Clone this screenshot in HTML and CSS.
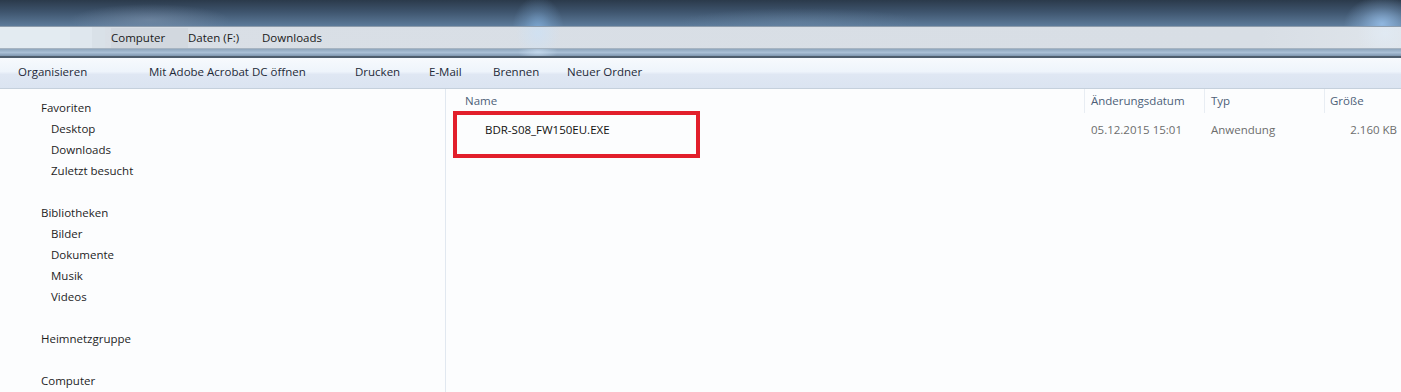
FILE: index.html
```html
<!DOCTYPE html>
<html lang="de">
<head>
<meta charset="utf-8">
<title>Downloads</title>
<link rel="stylesheet" href="styles.css">
</head>
<body>
<div class="window">
  <div class="titlebar"></div>
  <div class="addressbar">
    <div class="addr-blank"></div>
    <div class="crumbs">
      <span class="crumb c1">Computer</span>
      <span class="crumb c2">Daten (F:)</span>
      <span class="crumb c3">Downloads</span>
    </div>
  </div>
  <div class="bluestrip"></div>
  <div class="toolbar">
    <span class="tool t1">Organisieren</span>
    <span class="tool t2">Mit Adobe Acrobat DC öffnen</span>
    <span class="tool t3">Drucken</span>
    <span class="tool t4">E-Mail</span>
    <span class="tool t5">Brennen</span>
    <span class="tool t6">Neuer Ordner</span>
  </div>
  <div class="main">
    <nav class="navpane">
      <div class="group">
        <div class="nav head">Favoriten</div>
        <div class="nav sub">Desktop</div>
        <div class="nav sub">Downloads</div>
        <div class="nav sub">Zuletzt besucht</div>
      </div>
      <div class="group">
        <div class="nav head">Bibliotheken</div>
        <div class="nav sub">Bilder</div>
        <div class="nav sub">Dokumente</div>
        <div class="nav sub">Musik</div>
        <div class="nav sub">Videos</div>
      </div>
      <div class="group">
        <div class="nav head">Heimnetzgruppe</div>
      </div>
      <div class="group">
        <div class="nav head">Computer</div>
      </div>
    </nav>
    <section class="files">
      <div class="header">
        <div class="col name">Name</div>
        <div class="col date">Änderungsdatum</div>
        <div class="col type">Typ</div>
        <div class="col size">Größe</div>
      </div>
      <div class="row">
        <div class="col name"><span class="fname">BDR-S08_FW150EU.EXE</span></div>
        <div class="col date">05.12.2015 15:01</div>
        <div class="col type">Anwendung</div>
        <div class="col size">2.160 KB</div>
        <div class="highlight"></div>
      </div>
    </section>
  </div>
</div>
</body>
</html>
```

FILE: styles.css
```css
html, body {
  margin: 0;
  padding: 0;
  width: 1401px;
  height: 392px;
  overflow: hidden;
  background: #fcfdfe;
}
body {
  font-family: "Open Sans", "Noto Sans", "DejaVu Sans", sans-serif;
  font-size: 11.5px;
  color: #1e1e1e;
}
.window {
  display: flex;
  flex-direction: column;
  height: 392px;
}
.titlebar {
  height: 26px;
  flex: none;
  background:
    radial-gradient(ellipse 26px 34px at 538px 30px, rgba(130,175,220,0.85), rgba(130,175,220,0.3) 55%, rgba(130,175,220,0) 100%),
    radial-gradient(ellipse 38px 28px at 1382px 24px, rgba(150,190,232,0.9), rgba(150,190,232,0.3) 60%, rgba(150,190,232,0) 100%),
    radial-gradient(ellipse 80px 16px at 150px 20px, rgba(140,160,185,0.45), rgba(140,160,185,0) 100%),
    radial-gradient(ellipse 120px 14px at 800px 22px, rgba(120,150,180,0.3), rgba(120,150,180,0) 100%),
    linear-gradient(to bottom, #2b3a4b 0%, #3e546d 45%, #5d7b9a 100%);
  border-bottom: 1px solid #8d9cac;
}
.addressbar {
  height: 21px;
  flex: none;
  display: flex;
  align-items: stretch;
  background:
    radial-gradient(ellipse 22px 24px at 538px 6px, rgba(205,225,245,0.75), rgba(205,225,245,0) 100%),
    radial-gradient(ellipse 28px 24px at 1385px 6px, rgba(225,235,245,0.8), rgba(225,235,245,0) 100%),
    linear-gradient(to right, #d9dfe6, #d8dee5 90%, #dfe5eb);
  border-bottom: 1px solid #a7b4c1;
}
.addr-blank {
  width: 105px;
  flex: none;
  background: linear-gradient(to right, #e3ebf1 0 70px, #dfe7ee 70px 92px, #d9e1e8 92px);
}
.crumbs {
  display: flex;
  align-items: center;
  color: #1a1a1a;
}
.crumb { line-height: 20px; }
.c1 { margin-left: 6px; width: 71px; padding-right: 6px; background: #d2d8df; }
.c2 { width: 74px; }
.bluestrip {
  height: 7px;
  flex: none;
  background:
    radial-gradient(ellipse 20px 8px at 538px 3px, rgba(210,230,250,0.6), rgba(210,230,250,0) 100%),
    linear-gradient(to bottom, #8ea5bc 0%, #a9bfd5 50%, #7e96af 100%);
  border-bottom: 2px solid #4e5d6c;
}
.toolbar {
  height: 30px;
  flex: none;
  display: flex;
  align-items: flex-start;
  background: linear-gradient(to bottom, #f7fafd 0%, #eef4fb 45%, #dfe7f3 55%, #dbe4f1 100%);
  border-bottom: 1px solid #c5d0dc;
  color: #1e2a38;
  padding-left: 18px;
}
.tool { line-height: 28px; white-space: nowrap; }
.t1 { width: 131px; }
.t2 { width: 206px; }
.t3 { width: 74px; }
.t4 { width: 64px; }
.t5 { width: 74px; }
.main {
  flex: 1;
  display: flex;
  min-height: 0;
}
.navpane {
  width: 445px;
  flex: none;
  border-right: 1px solid #e1e8f0;
  padding-top: 8px;
  display: flex;
  flex-direction: column;
  gap: 21px;
}
.nav {
  height: 21px;
  line-height: 21px;
  white-space: nowrap;
}
.head { padding-left: 41px; }
.sub { padding-left: 51px; }
.files {
  flex: 1;
  position: relative;
}
.header, .row {
  display: flex;
  align-items: center;
}
.header {
  height: 24px;
  color: #4d5f78;
}
.header .col {
  height: 24px;
  line-height: 24px;
}
.col { white-space: nowrap; }
.col.name { width: 619px; padding-left: 19px; }
.col.date { width: 113px; padding-left: 6px; border-left: 1px solid #e8edf3; }
.col.type { width: 113px; padding-left: 6px; border-left: 1px solid #e8edf3; }
.col.size { flex: 1; padding-left: 5px; border-left: 1px solid #e8edf3; }
.row {
  height: 32px;
  color: #6d6d6d;
  position: relative;
}
.row .col { border-left-color: transparent; }
.row .col.size { text-align: right; padding-right: 4px; }
.fname { color: #111; margin-left: 20px; }
.highlight {
  position: absolute;
  left: 7px;
  top: -2px;
  width: 239px;
  height: 39px;
  border: 4px solid #e21f2b;
}
```
